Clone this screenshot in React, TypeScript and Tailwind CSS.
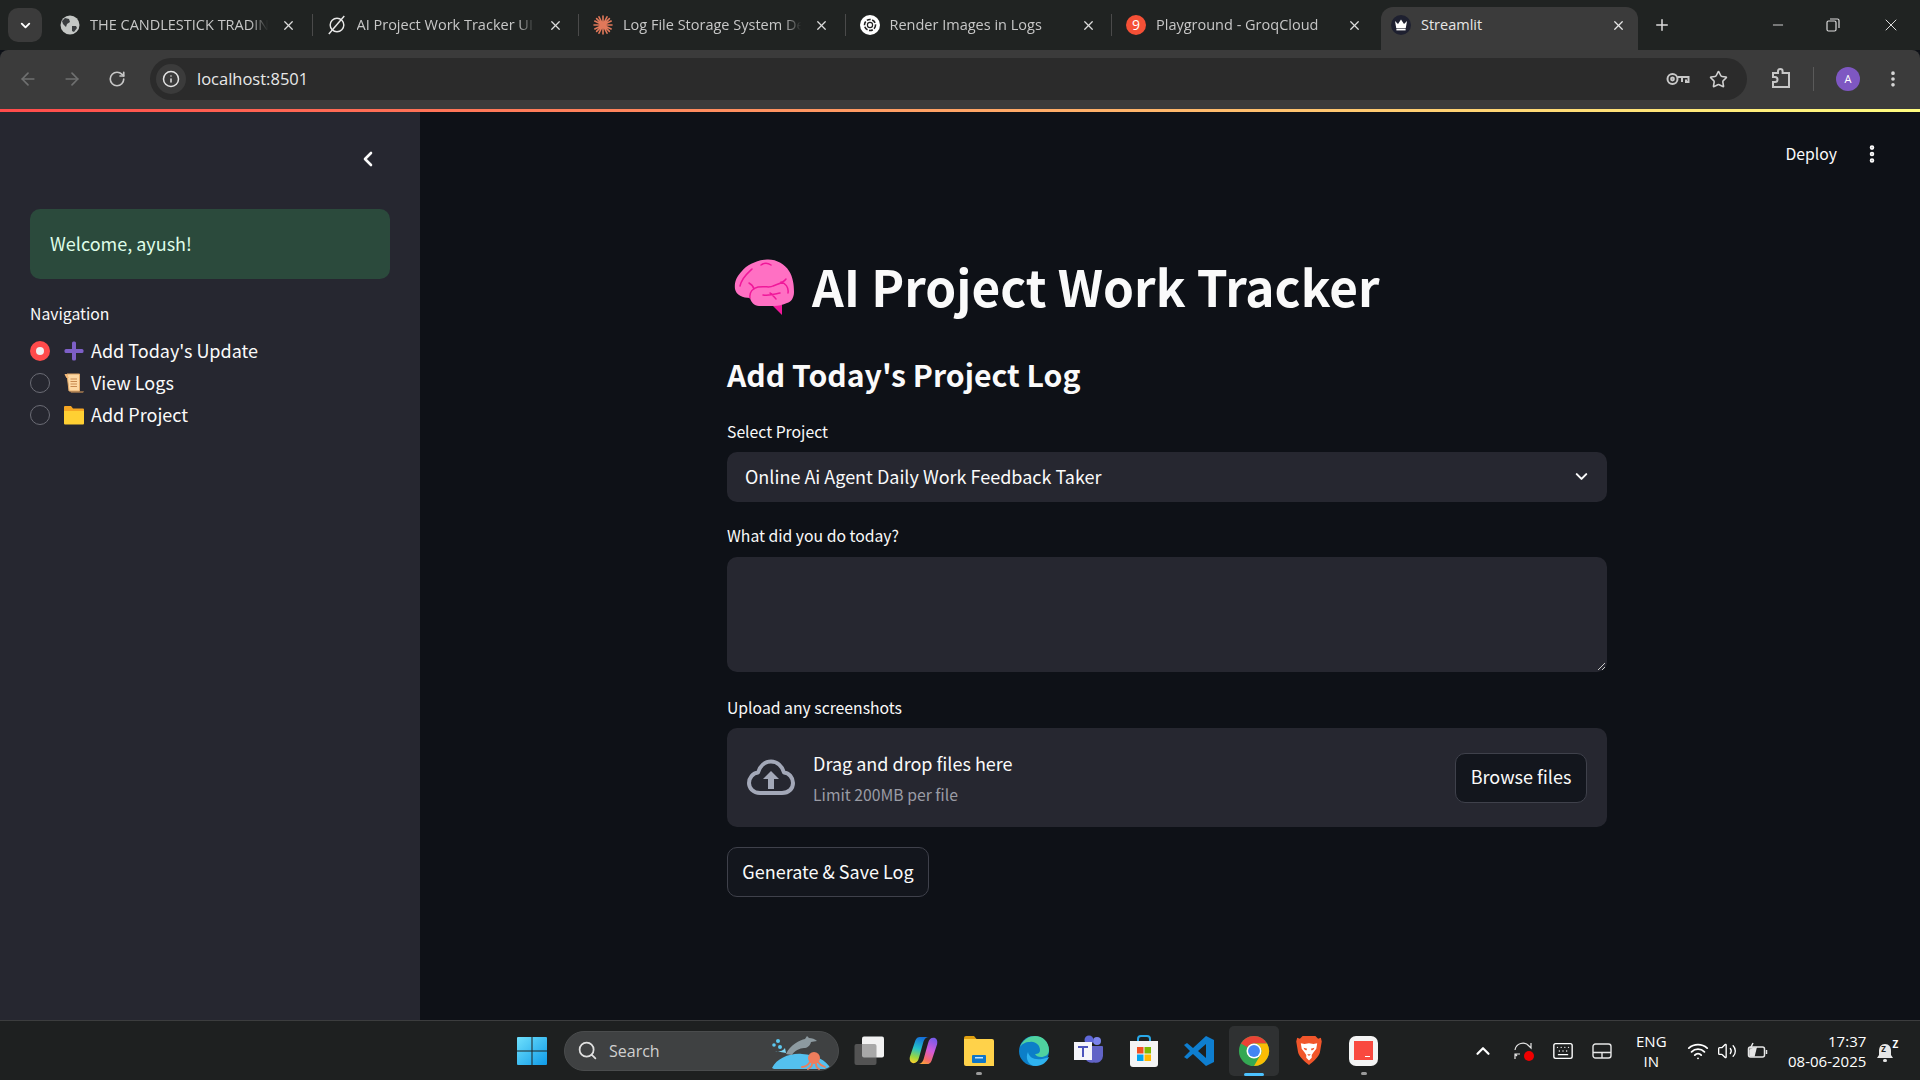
import React from "react";
import { ArrowLeft, ArrowRight, RotateCw, Info, Star, MoreVertical, X, Plus, Minus, ChevronDown, ChevronLeft, ChevronUp, Search, Wifi, Volume2, Keyboard } from "lucide-react";

const Globe = () => (
  <svg width="20" height="20" viewBox="0 0 20 20"><circle cx="10" cy="10" r="9.5" fill="#c4c7c5" /><path d="M5 3l4 1 1 3-3 2-1 3-3-3-1-3zM12 11l4 0 1 2-3 4-2-1z" fill="#3a3d3f" /></svg>
);
const Linear = () => (
  <svg width="22" height="24" viewBox="0 0 22 24" fill="none" stroke="#e8e8e8" strokeWidth="1.6"><circle cx="11" cy="12" r="7.5" /><path d="M2 22L19 2" /></svg>
);
const Burst = () => (
  <svg width="20" height="20" viewBox="0 0 20 20" stroke="#e0785a" strokeWidth="1.6" strokeLinecap="round">
    <path d="M10 1v18M1 10h18M3.6 3.6l12.8 12.8M16.4 3.6L3.6 16.4M6 1.8l8 16.4M14 1.8L6 18.2M1.8 6l16.4 8M18.2 6L1.8 14" />
  </svg>
);
const OpenAI = () => (
  <svg width="20" height="20" viewBox="0 0 20 20"><circle cx="10" cy="10" r="10" fill="#fff" /><circle cx="10" cy="10" r="5.5" fill="none" stroke="#222" strokeWidth="1.6" strokeDasharray="4 1.5" /><circle cx="10" cy="10" r="2.6" fill="none" stroke="#222" strokeWidth="1.2" /></svg>
);
const Groq = () => (
  <div className="flex h-5 w-5 items-center justify-center rounded-full bg-[#f55036] text-[14px] leading-none text-white">9</div>
);
const Crown = () => (
  <div className="flex h-5 w-5 items-center justify-center rounded-full bg-[#1e2030]">
    <svg width="14" height="12" viewBox="0 0 14 12" fill="#fff"><path d="M1 2l3 3 3-4.5L10 5l3-3-1.2 7H2.2z" /><rect x="2.4" y="9.6" width="9.2" height="1.8" /></svg>
  </div>
);

const tabs = [
  { t: "THE CANDLESTICK TRADIN", i: <Globe /> },
  { t: "AI Project Work Tracker UI", i: <Linear /> },
  { t: "Log File Storage System De", i: <Burst /> },
  { t: "Render Images in Logs", i: <OpenAI /> },
  { t: "Playground - GroqCloud", i: <Groq /> },
];

function TabBar() {
  return (
    <div className="flex h-[50px] shrink-0 bg-[#202322] pl-2 pt-[7px] font-['Open_Sans',sans-serif] text-[14.5px] text-[#c7c7c7]">
      <div className="mr-[4px] mt-px flex h-[34px] w-[34px] items-center justify-center rounded-[10px] bg-[#3b3b3b]">
        <ChevronDown size={15} strokeWidth={3} color="#fff" />
      </div>
      {tabs.map((tab, n) => (
        <div key={n} className="relative flex h-[36px] w-[266.5px] items-center pl-[14px]">
          <span className="flex w-5 shrink-0 items-center justify-center">{tab.i}</span>
          <span className="ml-[10px] w-[182px] whitespace-nowrap [mask-image:linear-gradient(90deg,#000_88%,transparent_98%)]">{tab.t}</span>
          <X size={15} color="#dcdcdc" strokeWidth={2} className="ml-[9px] shrink-0" />
          {n < 4 && <span className="absolute right-0 top-[7px] h-[22px] w-px bg-[#4a4a4a]" />}
        </div>
      ))}
      <div className="ml-[2.5px] flex h-[43px] w-[257px] items-start rounded-t-[12px] bg-[#3b3b3b] pl-[10px] pt-[8px] text-[#e6e6e6]">
        <span className="flex h-5 w-5 shrink-0 items-center justify-center"><Crown /></span>
        <span className="ml-[10px] flex-1 leading-[20px]">Streamlit</span>
        <X size={15} color="#e6e6e6" strokeWidth={2} className="mr-[12px] mt-[3px] shrink-0" />
      </div>
      <Plus size={18} color="#dcdcdc" strokeWidth={2} className="ml-[15px] mt-[9px]" />
      <div className="ml-auto flex h-[36px] items-center text-[#dcdcdc]">
        <Minus size={16} strokeWidth={1.4} className="mr-[40px]" />
        <svg width="14" height="14" viewBox="0 0 14 14" fill="none" stroke="#dcdcdc" strokeWidth="1.2" className="mr-[41px]"><rect x="1" y="3" width="9" height="10" rx="1.5" /><path d="M4 1h7.5A1.5 1.5 0 0 1 13 2.5V10" /></svg>
        <X size={20} strokeWidth={1.2} className="mr-[19px]" />
      </div>
    </div>
  );
}

function ToolBar() {
  return (
    <div className="flex h-[58.5px] shrink-0 items-start rounded-t-[8px] bg-[#3b3b3b] pt-2">
      <div className="flex h-[42px] w-[150px] items-center pl-[18px]">
        <ArrowLeft size={20} color="#6f7070" strokeWidth={2} />
        <ArrowRight size={20} color="#6f7070" strokeWidth={2} className="ml-[24px]" />
        <RotateCw size={18} color="#c7c7c7" strokeWidth={2.2} className="ml-[26px]" />
      </div>
      <div className="flex h-[42px] w-[1597px] items-center rounded-full bg-[#2b2b2b] pl-[6px] pr-[19.5px]">
        <div className="flex h-[30px] w-[30px] items-center justify-center rounded-full bg-[#3b3b3b]"><Info size={18} color="#e3e3e3" strokeWidth={2} /></div>
        <span className="ml-[11px] font-['Open_Sans',sans-serif] text-[16.5px] text-[#e8e8e8]">localhost:8501</span>
        <svg width="24" height="16" viewBox="0 0 24 16" fill="none" stroke="#c7c7c7" strokeWidth="2" className="ml-auto"><circle cx="6.5" cy="8" r="5" /><circle cx="6.5" cy="8" r="1.4" /><path d="M11.5 6H22.5V11H20V8.5M16 6V11" /></svg>
        <Star size={19} color="#d0d0d0" strokeWidth={2} className="ml-[19px]" />
      </div>
      <div className="flex h-[42px] flex-1 items-center">
        <svg width="22" height="24" viewBox="0 0 22 24" fill="none" stroke="#c7c7c7" strokeWidth="2" className="ml-[23px]"><path d="M3 6h5V4.2a2.3 2.3 0 0 1 4.600 0V6H19v14H3v-5h2a2.500 2.500 0 0 0 0-5H3z" /></svg>
        <span className="ml-[21px] h-6 w-px bg-[#5a5a5a]" />
        <div className="ml-[22px] flex h-6 w-6 items-center justify-center rounded-full bg-[#7e57c2] font-['Open_Sans',sans-serif] text-[11px] text-white">A</div>
        <MoreVertical size={20} color="#d8d8d8" strokeWidth={2.4} className="ml-[23px]" />
      </div>
    </div>
  );
}

const Plus3 = () => (
  <svg width="20" height="20" viewBox="0 0 20 20" fill="#7d5fc7"><rect x="8" y="0.500" width="4" height="19" rx="1.500" /><rect x="0.500" y="8" width="19" height="4" rx="1.500" /></svg>
);
const Scroll = () => (
  <svg width="20" height="20" viewBox="0 0 20 20">
    <path d="M3 1h12.500v17H5z" fill="#fdd8a3" stroke="#e0a868" strokeWidth="1" />
    <path d="M0.500 1.500C2 0.500 3.500 1 4 3L5 5H2.500z" fill="#f3b878" />
    <path d="M6 18.500h14c-.5 1-1.500 1-2 1H7z" fill="#e8a55e" />
    <path d="M6.500 6h6.500M6.500 8.500h6.500M6.500 11h6.500M6.500 13.500h6.500" stroke="#c88a50" strokeWidth="1" />
  </svg>
);
const Folder = () => (
  <svg width="20" height="20" viewBox="0 0 20 20"><path d="M0 2a1 1 0 0 1 1-1h6l2 2.500h10a1 1 0 0 1 1 1V7H0z" fill="#f5a623" /><path d="M0 6h20v12.500a1 1 0 0 1-1 1H1a1 1 0 0 1-1-1z" fill="#ffd033" /></svg>
);

function Radio({ on }: { on?: boolean }) {
  return on ? (
    <span className="flex h-5 w-5 items-center justify-center rounded-full bg-[#ff4b4b]"><span className="h-2 w-2 rounded-full bg-[#f0f0f0]" /></span>
  ) : (
    <span className="h-5 w-5 rounded-full border border-[#6b6c75]" />
  );
}

function Sidebar() {
  const items = [
    { t: "Add Today's Update", i: <Plus3 />, on: true },
    { t: "View Logs", i: <Scroll /> },
    { t: "Add Project", i: <Folder /> },
  ];
  return (
    <aside className="w-[420px] shrink-0 bg-[#262730] px-[30px] text-[#fafafa]">
      <div className="flex h-[97px] items-start justify-end pr-[10px] pt-[35px]">
        <ChevronLeft size={24} color="#fafafa" strokeWidth={2.6} />
      </div>
      <div className="flex h-[70px] items-center rounded-[10px] bg-[#2b4a3c] pb-[2px] pl-5 text-[18px] text-[#dffde9]">Welcome, ayush!</div>
      <div className="mt-[24px] h-[22px] text-[15.75px] leading-[22px]">Navigation</div>
      <div className="mt-[11px] flex flex-col gap-[2px]">
        {items.map((it) => (
          <div key={it.t} className="flex h-[30px] items-center">
            <Radio on={it.on} />
            <span className="ml-[14px] flex h-5 w-5 items-center justify-center">{it.i}</span>
            <span className="ml-[7px] pb-[2px] text-[18px] leading-[28px]">{it.t}</span>
          </div>
        ))}
      </div>
    </aside>
  );
}

const Brain = () => (
  <svg width="62" height="58" viewBox="0 0 62 58" className="shrink-0">
    <path d="M38 46l10 10V46z" fill="#f0189a" />
    <path d="M1 30C0 23 3 17 8 12 13 6 23 1 33 0.500 42 0 51 5 55 12c4 6 5 14 5 21 0 6-3 10-7 11-4 2-9 3-13 3H25c-5 0-8-4-9-8-7 0-14-3-15-9z" fill="#ff70c3" />
    <path d="M6 27C8 18 14 14 18 10M27 6c3-2 7-2 10 0M15 24c2 1 4 3 5 6M16 39c-1-6 3-10 8-11 8-1 12 1 15-1 5-2 10-3 13-7M54 34c1-6-3-10-7-11M29 36c7 1 12-1 17-2M36 34c2 1 4 4 6 6" fill="none" stroke="#f0189a" strokeWidth="1.500" strokeLinecap="round" />
  </svg>
);

const Cloud = () => (
  <svg width="48" height="38" viewBox="0 0 48 38" fill="none">
    <path d="M13 34C6 34 2 29 2 24c0-5 4-10 9-10.500C13 7 18 2.500 24 2.500S35 7 37 13.500c5 .5 9 5 9 10.500s-4 10-11 10z" stroke="#a3a8b8" strokeWidth="4" strokeLinejoin="round" />
    <path d="M24 12l8 8h-5v10h-6V20h-5z" fill="#a3a8b8" />
  </svg>
);

function Label({ children, cls }: { children: React.ReactNode; cls: string }) {
  return <div className={"h-[22px] text-[15.75px] leading-[22px] " + cls}>{children}</div>;
}

function Main() {
  return (
    <main className="min-w-0 flex-1 bg-[#0e1117] text-[#fafafa]">
      <div className="flex h-[62px] items-end justify-end pb-[8px] pr-[39px]">
        <span className="text-[15.75px] leading-[24px]">Deploy</span>
        <MoreVertical size={22} color="#fafafa" strokeWidth={3} className="ml-[24px] mr-[-2px] mb-px" />
      </div>
      <div className="ml-[307px] w-[880px]">
        <div className="mt-[84px] flex h-[60px] items-center pl-[7px]">
          <Brain />
          <h1 className="ml-[16px] whitespace-nowrap pb-[5px] text-[49.5px] font-bold leading-[55px]">AI Project Work Tracker</h1>
        </div>
        <h2 className="mt-[33px] h-[46px] text-[30.2px] font-semibold leading-[46px]">Add Today's Project Log</h2>
        <Label cls="mt-[24px]">Select Project</Label>
        <div className="mt-[9px] flex h-[50px] items-center justify-between rounded-[10px] bg-[#262730] pb-px pl-[18px] pr-[16px]">
          <span className="text-[18px]">Online Ai Agent Daily Work Feedback Taker</span>
          <ChevronDown size={19} color="#fafafa" strokeWidth={2.6} />
        </div>
        <Label cls="mt-[23px]">What did you do today?</Label>
        <div className="relative mt-[10px] h-[115px] rounded-[10px] bg-[#262730]">
          <svg width="9" height="9" viewBox="0 0 9 9" stroke="#c9c9c9" strokeWidth="1" className="absolute bottom-[1px] right-[1px]"><path d="M1 8L8 1M5 8L8 5" /></svg>
        </div>
        <Label cls="mt-[25px]">Upload any screenshots</Label>
        <div className="mt-[9px] flex h-[99px] items-center rounded-[10px] bg-[#262730] pl-[20px] pr-[20px]">
          <Cloud />
          <div className="ml-[18px] flex-1">
            <div className="h-[30px] text-[18px] leading-[28px]">Drag and drop files here</div>
            <div className="mt-[5px] h-[22px] text-[15.75px] leading-[22px] text-[#9a9ca5]">Limit 200MB per file</div>
          </div>
          <div className="flex h-[50px] w-[132px] items-center justify-center rounded-[10px] border border-[#3f414b] bg-[#13161d] pb-[2px] text-[18px]">Browse files</div>
        </div>
        <div className="mt-[20px] flex h-[50px] w-[202px] items-center justify-center rounded-[10px] border border-[#3f414b] bg-[#13161d] pb-[2px] text-[18px]">Generate &amp; Save Log</div>
      </div>
    </main>
  );
}

const Win = () => (
  <svg width="30" height="30" viewBox="0 0 30 30">
    <defs><linearGradient id="wg" x1="0" y1="0" x2="1" y2="1"><stop offset="0" stopColor="#6fe0fc" /><stop offset="1" stopColor="#0f9be8" /></linearGradient></defs>
    <path d="M1 1h13.500v13.500H0V2a1 1 0 0 1 1-1zM15.500 1H29a1 1 0 0 1 1 1v12.500H15.500zM0 15.500h14.500V29H1a1 1 0 0 1-1-1zM15.500 15.500H30V28a1 1 0 0 1-1 1H15.500z" fill="url(#wg)" />
  </svg>
);
const TaskView = () => (
  <svg width="32" height="30" viewBox="0 0 32 30"><rect x="9" y="0.500" width="22" height="21" rx="2" fill="#f2f2f2" /><rect x="1.500" y="8" width="22" height="21" rx="2" fill="#777" fillOpacity=".6" /></svg>
);
const Copilot = () => (
  <svg width="29" height="29" viewBox="0 0 32 32">
    <defs>
      <linearGradient id="cpa" x1="0.500" y1="0" x2="0.300" y2="1"><stop offset="0" stopColor="#1570d8" /><stop offset=".45" stopColor="#25c2c8" /><stop offset=".8" stopColor="#9fd63c" /><stop offset="1" stopColor="#f8d12f" /></linearGradient>
      <linearGradient id="cpb" x1="0.700" y1="0" x2="0.300" y2="1"><stop offset="0" stopColor="#7a5be8" /><stop offset=".45" stopColor="#d45ad8" /><stop offset=".8" stopColor="#f56a6a" /><stop offset="1" stopColor="#f8a23c" /></linearGradient>
    </defs>
    <path d="M12 1h10c-3 0-5 2-6 5l-5 18c-1 4-3 6-6 6-3 0-5-3-4-7L7 5c1-3 3-4 5-4z" fill="url(#cpa)" />
    <path d="M20 31H10c3 0 5-2 6-5l5-18c1-4 3-6 6-6 3 0 5 3 4 7l-6 18c-1 3-3 4-5 4z" fill="url(#cpb)" />
  </svg>
);
const Explorer = () => (
  <svg width="32" height="32" viewBox="0 0 32 32">
    <path d="M1 3a2 2 0 0 1 2-2h8l3 3.500h-13z" fill="#e0a010" />
    <path d="M1 4h28a2 2 0 0 1 2 2v25H3a2 2 0 0 1-2-2z" fill="#ffd24a" />
    <rect x="9" y="20" width="14" height="8" rx="1" fill="#0f76c8" /><rect x="12" y="22" width="8" height="1.500" fill="#bfe4ff" />
  </svg>
);
const Edge = () => (
  <svg width="32" height="32" viewBox="0 0 32 32">
    <circle cx="16" cy="16" r="15" fill="#0c7fc8" />
    <path d="M2 12C5 4 12 1 17 1c8 0 14 6 14 14 0 5-4 7-8 7-3 0-5-1-6-3 3 0 5-1 5-4 0-5-5-9-10-8-5 0-8 2-10 5z" fill="#4fd3a0" />
    <path d="M31 22c-2 5-7 9-13 9-8 0-11-8-8-14 1 6 8 10 21 5z" fill="#2fb3f0" />
  </svg>
);
const Teams = () => (
  <svg width="32" height="32" viewBox="0 0 32 32">
    <circle cx="24" cy="6" r="4" fill="#7b83eb" /><circle cx="16" cy="5" r="4.500" fill="#5f68d8" />
    <path d="M11 11h18a1 1 0 0 1 1 1v9a7 7 0 0 1-9 6.500A8 8 0 0 1 11 21z" fill="#6264c7" />
    <rect x="1" y="7" width="18" height="18" fill="#f4f4fa" /><path d="M5 11h10v2h-4v9H9v-9H5z" fill="#4b53bc" />
  </svg>
);
const Store = () => (
  <svg width="30" height="32" viewBox="0 0 30 32">
    <path d="M9 8V4a3 3 0 0 1 3-3h6a3 3 0 0 1 3 3v4" fill="none" stroke="#29a8e8" strokeWidth="2" />
    <path d="M1 6h28v23a3 3 0 0 1-3 3H4a3 3 0 0 1-3-3z" fill="#f4f4f4" />
    <rect x="8" y="12" width="6.500" height="6.500" fill="#f25022" /><rect x="15.500" y="12" width="6.500" height="6.500" fill="#7fba00" /><rect x="8" y="19.500" width="6.500" height="6.500" fill="#00a4ef" /><rect x="15.500" y="19.500" width="6.500" height="6.500" fill="#ffb900" />
  </svg>
);
const VSCode = () => (
  <svg width="32" height="32" viewBox="0 0 32 32"><path d="M23 1l8 4v22l-8 4L10 19l-6 5-3-2 6-6-6-6 3-2 6 5zM23 9l-8 7 8 7z" fill="#0e7ed0" fillRule="evenodd" /></svg>
);
const Chrome = () => (
  <svg width="32" height="32" viewBox="0 0 34 34">
    <circle cx="17" cy="17" r="16" fill="#34a853" />
    <path d="M3.140 9A16 16 0 0 1 30.860 9H17a8 8 0 0 0-6.930 4z" fill="#ea4335" />
    <path d="M30.860 9A16 16 0 0 1 17 33l6.930-12A8 8 0 0 0 17 9z" fill="#fbbc04" />
    <circle cx="17" cy="17" r="8" fill="#fff" /><circle cx="17" cy="17" r="6.300" fill="#4285f4" />
  </svg>
);
const Brave = () => (
  <svg width="26" height="31" viewBox="0 0 28 34">
    <path d="M7 1h14l3 3 3-1 1 4-2 12c-1 5-8 11-12 14C10 30 3 24 2 19L0 7l1-4 3 1z" fill="#f1562b" />
    <path d="M5 9l4 1 5-1 5 1 4-1-1 6-3 4-2 3v3l-3 3-3-3v-3l-2-3-3-4z" fill="#fff" />
    <path d="M8 14l4 1-1 2-2-1zM20 14l-4 1 1 2 2-1zM12 21h4l-2 2z" fill="#f1562b" />
  </svg>
);
const RedApp = () => (
  <div className="flex h-[30px] w-[29px] items-center justify-center rounded-[7px] bg-[#f4f4f4]">
    <div className="relative h-[19px] w-[19px] bg-[#f9493f]"><span className="absolute bottom-[3px] right-[3px] h-px w-[5px] bg-white" /></div>
  </div>
);

function TaskIcon({ children, active, dot }: { children: React.ReactNode; active?: boolean; dot?: boolean }) {
  return (
    <div className={"relative flex h-[50px] w-[50px] items-center justify-center rounded-[5px] mx-[2.500px] " + (active ? "bg-[#2f3132]" : "")}>
      {children}
      {dot && <span className="absolute bottom-[1px] left-[22px] h-[3px] w-[6px] rounded-full bg-[#9a9a9a]" />}
      {active && <span className="absolute bottom-0 left-[15px] h-[3px] w-[20px] rounded-full bg-[#4cc2ff]" />}
    </div>
  );
}

function Taskbar() {
  return (
    <footer className="flex h-[60px] shrink-0 items-center border-t border-[#3c3d3e] bg-[#1e2020] font-['Open_Sans',sans-serif] text-white">
      <div className="ml-[517px]"><Win /></div>
      <div className="relative ml-[17px] flex h-10 w-[275px] items-center overflow-hidden rounded-full border border-[#4a4c4d] bg-[#3f4142] pl-[12px] text-[16px] text-[#d0d0d0]">
        <Search size={21} strokeWidth={2} color="#e0e0e0" />
        <span className="ml-[11px]">Search</span>
        <svg width="66" height="40" viewBox="0 0 66 40" className="absolute right-0 top-[-1px]">
          <path d="M0 37C5 27 18 22 30 23c14 1 24 6 29 15H2z" fill="#54c0ee" />
          <path d="M14 23C18 14 28 9 33 8l2-3 2 2c3 0 6 1 8 3l-6 1c-1 4-4 6-7 6-4 0-10 3-12 7z" fill="#8d9aa0" />
          <circle cx="2" cy="14" r="1.800" fill="#5cc8f0" /><circle cx="6" cy="10" r="2" fill="#5cc8f0" /><circle cx="8" cy="16" r="2" fill="#5cc8f0" /><path d="M3 20c3 1 7 1 10-3l1 5z" fill="#7fd6f4" />
          <circle cx="42" cy="27" r="6" fill="#ee7d5c" />
          <path d="M38 31c-2 3-4 5-8 5M40 33c0 2-2 4-4 5M44 33c0 2 1 4 3 5M46 31c2 3 4 4 7 5" fill="none" stroke="#ee7d5c" strokeWidth="1.800" strokeLinecap="round" />
        </svg>
      </div>
      <div className="ml-[2.300px] flex">
        <TaskIcon><TaskView /></TaskIcon>
        <TaskIcon><Copilot /></TaskIcon>
        <TaskIcon dot><Explorer /></TaskIcon>
        <TaskIcon><Edge /></TaskIcon>
        <TaskIcon><Teams /></TaskIcon>
        <TaskIcon><Store /></TaskIcon>
        <TaskIcon><VSCode /></TaskIcon>
        <TaskIcon active><Chrome /></TaskIcon>
        <TaskIcon><Brave /></TaskIcon>
        <TaskIcon dot><RedApp /></TaskIcon>
      </div>
      <ChevronUp size={22} strokeWidth={2.4} className="ml-[81px]" />
      <div className="relative ml-[19px] h-5 w-5">
        <svg width="20" height="20" viewBox="0 0 20 20" fill="none" stroke="#e6e6e6" strokeWidth="1.200"><path d="M2 9a8 8 0 0 1 14-4l2 2V2M2 18v-5h5M2 13l2 2" /></svg>
        <span className="absolute bottom-0 right-[-1px] h-[10px] w-[10px] rounded-full bg-[#f00000]" />
      </div>
      <Keyboard size={22} strokeWidth={1.500} className="ml-[19px]" />
      <svg width="20" height="16" viewBox="0 0 20 16" fill="none" stroke="#e6e6e6" strokeWidth="1.400" className="ml-[18px]"><rect x="1" y="1" width="18" height="14" rx="2.500" /><path d="M1 9.500h18M10 9.500V15" /></svg>
      <div className="ml-[14px] w-[50px] text-center text-[15px] leading-[20px]">ENG<br />IN</div>
      <Wifi size={22} strokeWidth={2} className="ml-[11px]" />
      <Volume2 size={20} strokeWidth={1.600} className="ml-[8px]" />
      <svg width="22" height="18" viewBox="0 0 22 18" fill="none" stroke="#e6e6e6" strokeWidth="1.500" className="ml-[10px]"><rect x="1.500" y="5" width="16" height="10" rx="2" /><path d="M19.500 8v4" /><path d="M3 14V8l6-2-2 8z" fill="#e6e6e6" /><path d="M6 1L3.500 6H7L5 9" /></svg>
      <div className="ml-[7px] w-[90px] text-right text-[15px] leading-[20px]">17:37<br />08-06-2025</div>
      <div className="relative ml-[9px] h-6 w-5">
        <svg width="20" height="22" viewBox="0 0 20 22" fill="#e6e6e6" className="absolute top-[2px]"><path d="M10 3c-4 0-6 3-6 7v4l-2 3h16l-2-3v-4c0-4-2-7-6-7z" /><rect x="8" y="18" width="4" height="3" rx="1.500" /></svg>
        <span className="absolute left-[6px] top-[6px] text-[8px] font-bold leading-none text-[#1e2020]">Z</span>
        <span className="absolute right-[-3px] top-0 text-[10px] font-bold leading-none">Z</span>
      </div>
    </footer>
  );
}

export default function App() {
  return (
    <div className="flex h-screen w-screen flex-col overflow-hidden bg-[#0e1117] font-['Noto_Sans_CJK_SC','Source_Sans_3',sans-serif]">
      <TabBar />
      <ToolBar />
      <div className="h-[3.500px] shrink-0 bg-[linear-gradient(90deg,#ff4b4b,#fffd80)]" />
      <div className="flex min-h-0 flex-1">
        <Sidebar />
        <Main />
      </div>
      <Taskbar />
    </div>
  );
}
